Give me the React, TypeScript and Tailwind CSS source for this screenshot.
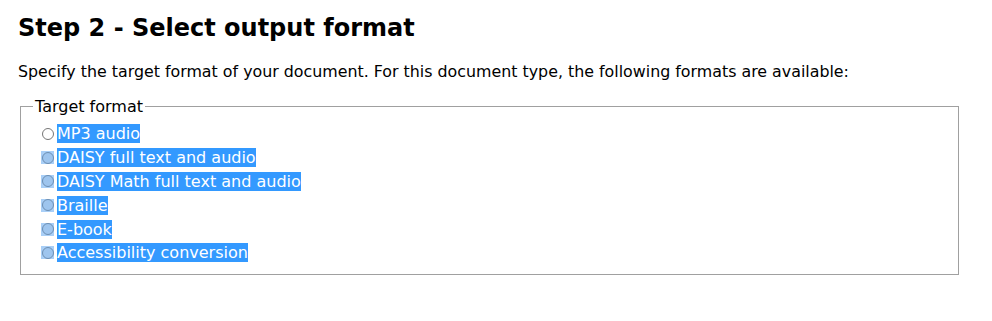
const formats = [
  { label: 'MP3 audio', selected: false },
  { label: 'DAISY full text and audio', selected: true },
  { label: 'DAISY Math full text and audio', selected: true },
  { label: 'Braille', selected: true },
  { label: 'E-book', selected: true },
  { label: 'Accessibility conversion', selected: true },
];

const Radio = ({ selected }: { selected: boolean }) =>
  selected ? (
    <span className="w-[13px] h-[13px] bg-[#a9cff7] flex items-center justify-center">
      <span className="w-[12px] h-[12px] rounded-full border border-[#6d8fb3] bg-[#9ec5ee]" />
    </span>
  ) : (
    <span className="w-[13px] h-[13px] flex items-center justify-center">
      <span className="w-[12px] h-[12px] rounded-full border border-[#767676] bg-white" />
    </span>
  );

export default function App() {
  return (
    <div className="bg-white w-[992px] h-[321px] px-[18px] pt-[14px] text-black font-['DejaVu_Sans',Verdana,sans-serif]">
      <h2 className="text-[24px] leading-[28px] font-bold">Step 2 - Select output format</h2>
      <p className="mt-[20px] text-[15.85px] leading-[19px]">
        Specify the target format of your document. For this document type, the following formats are available:
      </p>
      <fieldset className="mt-[16px] ml-[2px] w-[939px] border border-[#a0a0a0] pl-[12px] pr-[12px] pt-[6px] pb-[9px]">
        <legend className="px-[2px] text-[16px] leading-[19px]">Target format</legend>
        <div className="flex flex-col">
          {formats.map((f) => (
            <div key={f.label} className="h-[23.8px] flex items-center pl-[8px] gap-[3px]">
              <Radio selected={f.selected} />
              <span className="bg-[#3399ff] text-white text-[16px] leading-[19px]">{f.label}</span>
            </div>
          ))}
        </div>
      </fieldset>
    </div>
  );
}
